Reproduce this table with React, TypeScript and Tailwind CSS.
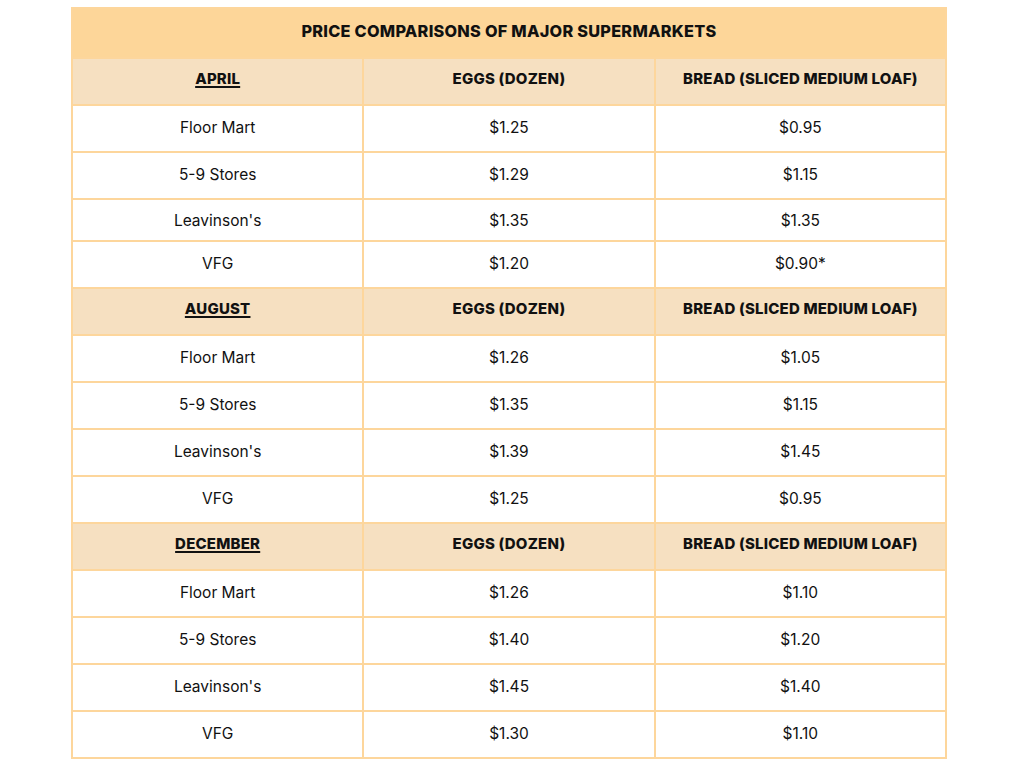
const months = [
  {
    name: "APRIL",
    rows: [
      ["Floor Mart", "$1.25", "$0.95"],
      ["5-9 Stores", "$1.29", "$1.15"],
      ["Leavinson's", "$1.35", "$1.35"],
      ["VFG", "$1.20", "$0.90*"],
    ],
  },
  {
    name: "AUGUST",
    rows: [
      ["Floor Mart", "$1.26", "$1.05"],
      ["5-9 Stores", "$1.35", "$1.15"],
      ["Leavinson's", "$1.39", "$1.45"],
      ["VFG", "$1.25", "$0.95"],
    ],
  },
  {
    name: "DECEMBER",
    rows: [
      ["Floor Mart", "$1.26", "$1.10"],
      ["5-9 Stores", "$1.40", "$1.20"],
      ["Leavinson's", "$1.45", "$1.40"],
      ["VFG", "$1.30", "$1.10"],
    ],
  },
];

export default function App() {
  return (
    <div className="min-h-screen bg-white pt-[7px] pl-[71px] font-['Inter',sans-serif] text-[#111]">
      <div className="grid w-[876px] grid-cols-3 gap-[2px] bg-[#fdd69c] p-[2px]">
        {/* Titel */}
        <div className="col-span-3 flex h-[48px] items-center justify-center bg-[#fdd699] pb-[3px] text-[16.3px] font-extrabold tracking-[0.25px]">
          PRICE COMPARISONS OF MAJOR SUPERMARKETS
        </div>

        {months.map((m, mi) => (
          <>
            <div key={m.name} className="flex h-[45px] items-center justify-center bg-[#f6e0c1] pb-[5px] text-[15px] font-extrabold tracking-[0.2px]">
              <span className="underline decoration-2 underline-offset-2">{m.name}</span>
            </div>
            <div className="flex h-[45px] items-center justify-center bg-[#f6e0c1] pb-[5px] text-[15px] font-extrabold tracking-[0.2px]">
              EGGS (DOZEN)
            </div>
            <div className="flex h-[45px] items-center justify-center bg-[#f6e0c1] pb-[5px] text-[15px] font-extrabold tracking-[0.2px]">
              BREAD (SLICED MEDIUM LOAF)
            </div>
            {m.rows.map((r, ri) => {
              // april leavinson's rij is in het origineel iets lager
              const h = mi === 0 && ri === 2 ? "h-[40px] pt-[2px]" : "h-[45px] pb-[1px]";
              return r.map((c, ci) => (
                <div key={`${m.name}-${ri}-${ci}`} className={`flex ${h} items-center justify-center bg-white text-[15.5px]`}>
                  {c}
                </div>
              ));
            })}
          </>
        ))}
      </div>
    </div>
  );
}
